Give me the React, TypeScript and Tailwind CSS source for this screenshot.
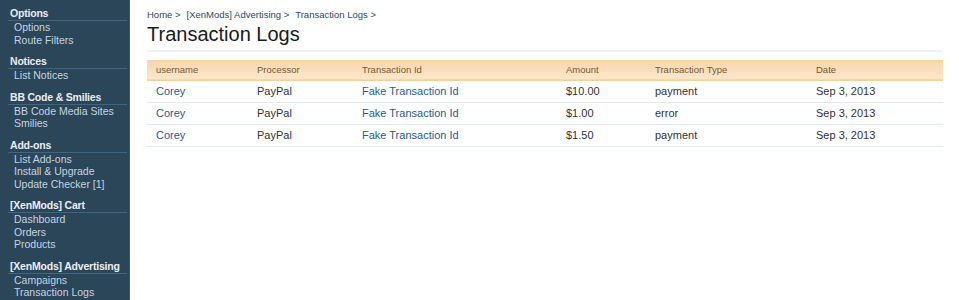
import React from "react"

const FONT = { fontFamily: '"Liberation Sans", Arial, sans-serif' }

const nav = [
  { title: "Options", links: ["Options", "Route Filters"] },
  { title: "Notices", links: ["List Notices"] },
  { title: "BB Code & Smilies", links: ["BB Code Media Sites", "Smilies"] },
  { title: "Add-ons", links: ["List Add-ons", "Install & Upgrade", "Update Checker [1]"] },
  { title: "[XenMods] Cart", links: ["Dashboard", "Orders", "Products"] },
  { title: "[XenMods] Advertising", links: ["Campaigns", "Transaction Logs"] },
]

const rows = [
  { user: "Corey", processor: "PayPal", txn: "Fake Transaction Id", amount: "$10.00", type: "payment", date: "Sep 3, 2013" },
  { user: "Corey", processor: "PayPal", txn: "Fake Transaction Id", amount: "$1.00", type: "error", date: "Sep 3, 2013" },
  { user: "Corey", processor: "PayPal", txn: "Fake Transaction Id", amount: "$1.50", type: "payment", date: "Sep 3, 2013" },
]

// column widths taken from the header label positions
const cols = ["w-[101px]", "w-[105px]", "w-[204px]", "w-[89px]", "w-[161px]", ""]

function Sidebar() {
  return (
    <aside className="w-[130px] shrink-0 bg-[#2c4659] border-r border-[#3d5a70] min-h-[300px] pt-[7px]">
      {nav.map((group, i) => (
        <div key={group.title} className={i > 0 ? "mt-[9px]" : ""}>
          <div className="ml-[8px] mr-[2px] pl-[2px] border-b border-[#3f6580] text-[10.5px] leading-[13px] font-bold text-[#e8eef3] whitespace-nowrap tracking-[-0.2px]">
            {group.title}
          </div>
          {group.links.map((link) => (
            <div key={link} className="pl-[14px] text-[10.5px] leading-[12.5px] text-[#c3d4e0] whitespace-nowrap">
              {link}
            </div>
          ))}
        </div>
      ))}
    </aside>
  )
}

export default function App() {
  return (
    <div className="flex w-[959px] h-[300px] bg-white overflow-hidden" style={FONT}>
      <Sidebar />
      <main className="flex-1 pl-[17px] pr-[16px]">
        <div className="pt-[9px] flex gap-[6px] text-[9.5px] leading-[12px] text-[#2b4a60]">
          <span>Home &gt;</span>
          <span>[XenMods] Advertising &gt;</span>
          <span>Transaction Logs &gt;</span>
        </div>
        <h1 className="mt-[1px] text-[20px] leading-[24px] text-[#1a1a1a] pb-[4px] border-b-2 border-[#eef3f7]">
          Transaction Logs
        </h1>
        <table className="mt-[8px] w-full table-fixed border-collapse text-left">
          <thead>
            <tr className="bg-gradient-to-b from-[#f8d6aa] to-[#fce7cb] border-b border-[#f1cfa2]">
              {["username", "Processor", "Transaction Id", "Amount", "Transaction Type", "Date"].map((h, i) => (
                <th key={h} className={`${cols[i]} pl-[9px] h-[20px] text-[9.5px] font-normal text-[#7a5632]`}>
                  {h}
                </th>
              ))}
            </tr>
          </thead>
          <tbody>
            {rows.map((r, i) => (
              <tr key={i} className="border-b border-[#e1ebf2] h-[22px] text-[11px]">
                <td className="pl-[9px] text-[#2a5b8a]">{r.user}</td>
                <td className="pl-[9px] text-[#333]">{r.processor}</td>
                <td className="pl-[9px] text-[#2a5b8a]">{r.txn}</td>
                <td className="pl-[9px] text-[#333]">{r.amount}</td>
                <td className="pl-[9px] text-[#333]">{r.type}</td>
                <td className="pl-[9px] text-[#333]">{r.date}</td>
              </tr>
            ))}
          </tbody>
        </table>
      </main>
    </div>
  )
}
